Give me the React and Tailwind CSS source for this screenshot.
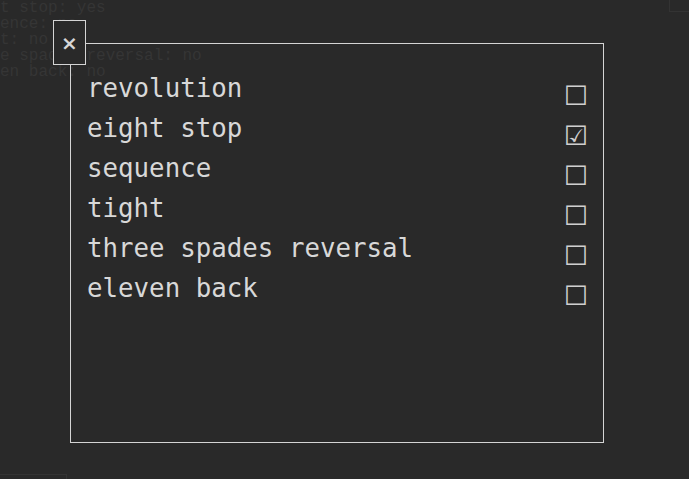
import React from 'react'

const items = [
  { label: 'revolution', checked: false },
  { label: 'eight stop', checked: true },
  { label: 'sequence', checked: false },
  { label: 'tight', checked: false },
  { label: 'three spades reversal', checked: false },
  { label: 'eleven back', checked: false },
]

const backLines = [
  'eight stop: yes',
  'sequence: no',
  'tight: no',
  'three spades reversal: no',
  'eleven back: no',
]

const App = () => {
  return (
    <div className="relative h-[479px] w-[689px] overflow-hidden bg-[#292929]">
      <pre className="ml-[-38.4px] font-['Liberation_Mono',monospace] text-[16px] leading-[16px] text-[#353535]">
        {backLines.join('\n')}
      </pre>

      <div className="absolute right-0 top-0 h-[12px] w-[20px] border-b border-l border-[#333]" />
      <div className="absolute bottom-0 left-0 h-[5px] w-[67px] border-r border-t border-[#333]" />

      <div className="absolute left-[70px] top-[43px] h-[400px] w-[534px] border border-[#d4d4d4]">
        <ul className="flex flex-col pl-[16px] pr-[15px] pt-[24px]">
          {items.map((item) => (
            <li key={item.label} className="flex h-[40px] items-start justify-between">
              <span className="font-['DejaVu_Sans_Mono',monospace] text-[25.8px] leading-[40px] text-[#d8d8d8]">
                {item.label}
              </span>
              <span className="mt-[8px] font-['DejaVu_Sans',sans-serif] text-[27px] font-bold leading-[40px] text-[#cfcfcf]">
                {item.checked ? '☑' : '☐'}
              </span>
            </li>
          ))}
        </ul>
      </div>

      <button className="absolute left-[53px] top-[20px] flex h-[45px] w-[33px] items-center justify-center border border-[#d4d4d4] bg-[#292929] font-['DejaVu_Sans',sans-serif] text-[20px] font-bold text-[#d6d6d6]">
        ×
      </button>
    </div>
  )
}

export default App
